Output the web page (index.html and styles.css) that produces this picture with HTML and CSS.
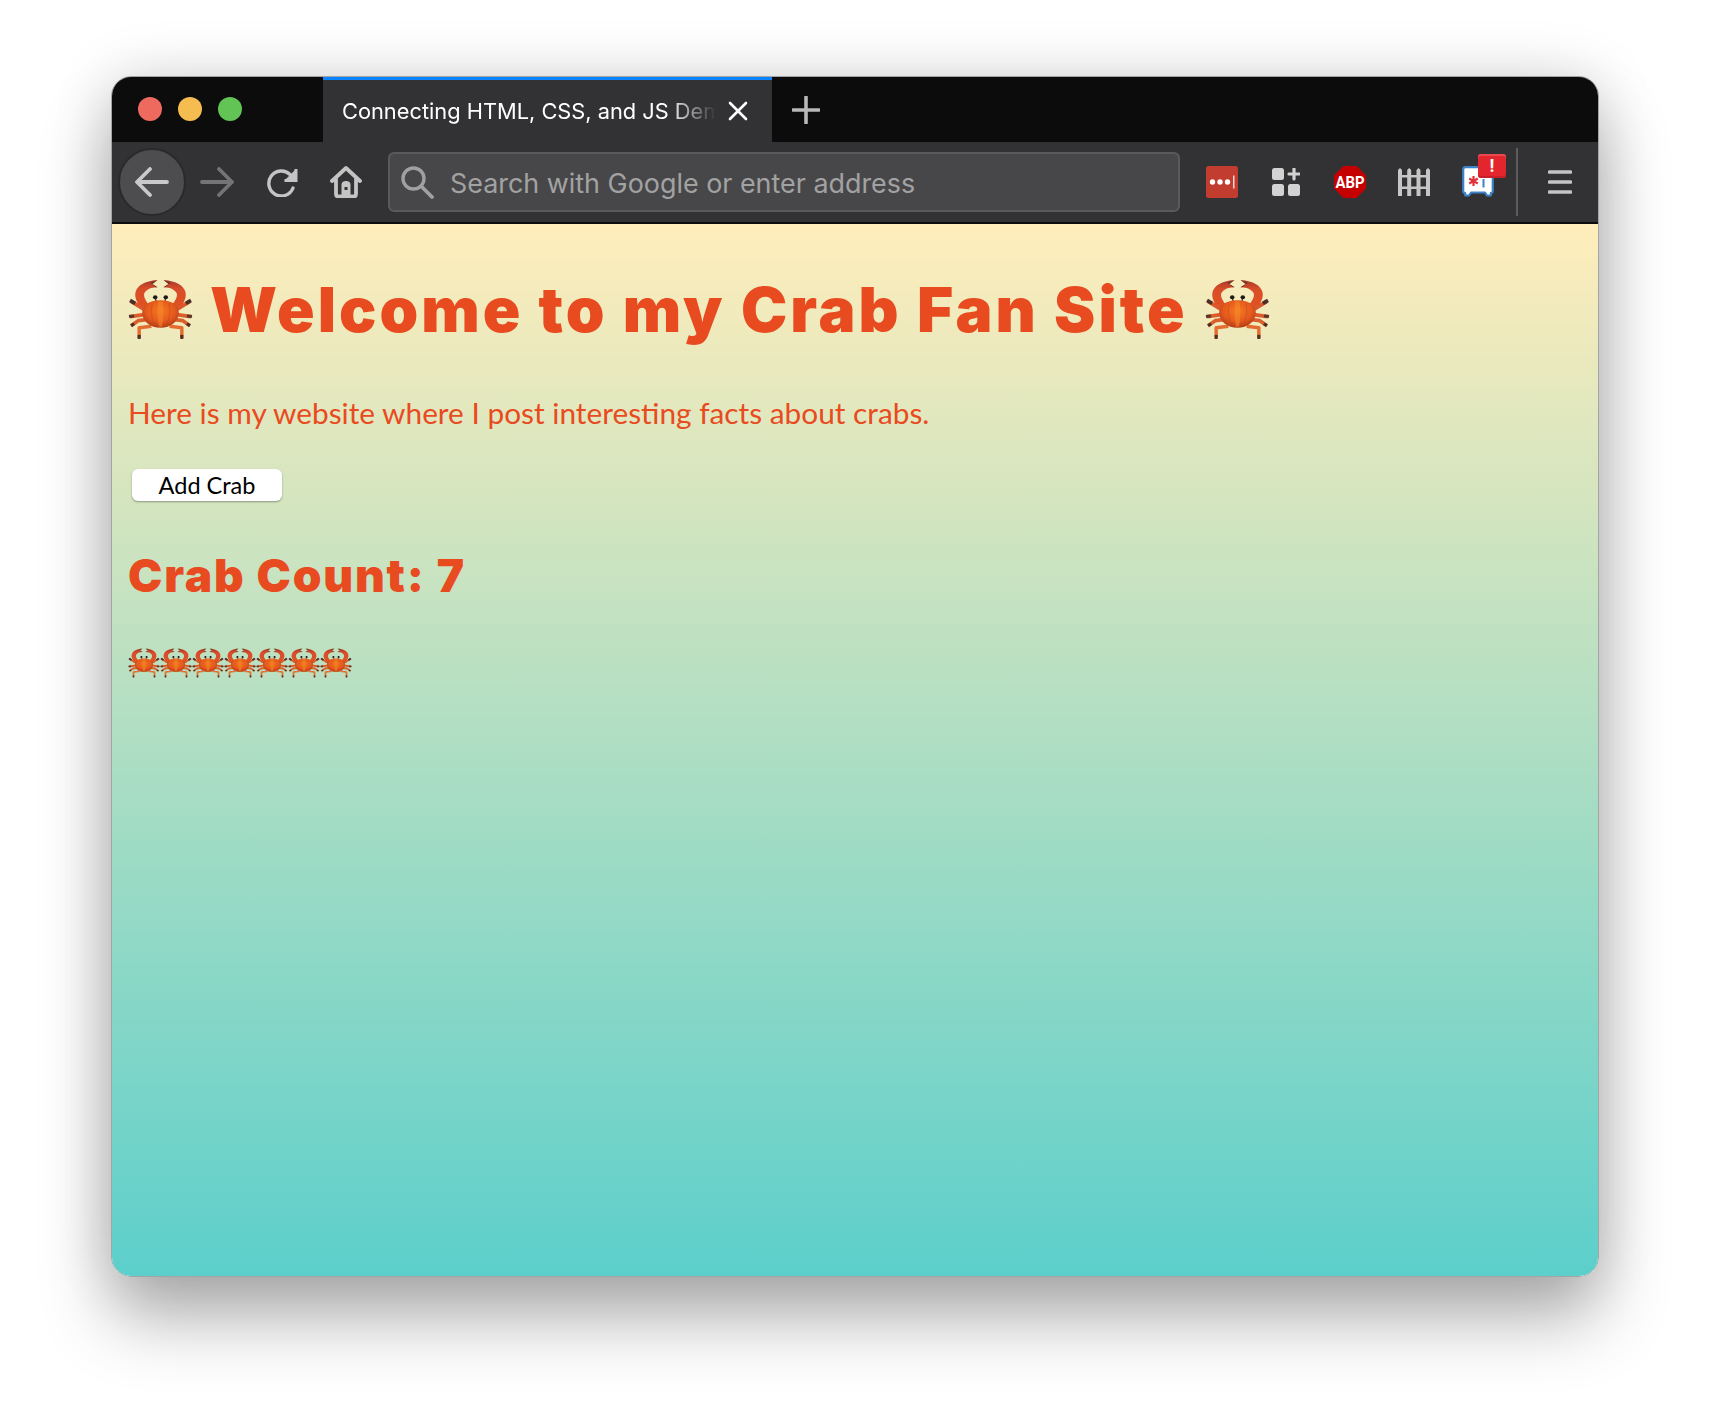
FILE: index.html
```html
<!DOCTYPE html>
<html lang="en">
<head>
<meta charset="utf-8">
<title>Crab Fan Site</title>
<link rel="stylesheet" href="styles.css">
</head>
<body>
<svg class="defs" width="0" height="0" aria-hidden="true">
  <defs>
    <radialGradient id="shell" cx="50%" cy="38%" r="62%">
      <stop offset="0" stop-color="#f4781f"/>
      <stop offset=".62" stop-color="#e65a1e"/>
      <stop offset="1" stop-color="#b23c16"/>
    </radialGradient>
    <linearGradient id="claw" x1="0" y1="0" x2="0" y2="1">
      <stop offset="0" stop-color="#a53a28"/>
      <stop offset=".3" stop-color="#d94c2a"/>
      <stop offset="1" stop-color="#e2531f"/>
    </linearGradient>
    <g id="crab-half">
      <path d="M15 30C9 25 6 18 7.500 12.500 9.500 6.500 16 2 29 1L24 5 29 8C23 8 18 10 16 14 15 18 18 22 21 26Z" fill="url(#claw)"/>
      <path d="M24 5 29 1 28 1.500 22 4ZM24 5 29 8 27 8Z" fill="#5a3328"/>
      <path d="M18 31 3 22" fill="none" stroke="#d9572a" stroke-width="3.800"/>
      <path d="M2 21 7 24" stroke="#4a2f28" stroke-width="3.600" fill="none"/>
      <path d="M16 35 2 37" fill="none" stroke="#dc5c2a" stroke-width="3.600"/>
      <path d="M1 37 6 36.300" stroke="#5a352a" stroke-width="3" fill="none"/>
      <path d="M18 40 10 41 3 46" fill="none" stroke="#d9602d" stroke-width="3.600" stroke-linejoin="round"/>
      <path d="M3 46 6 44" stroke="#4a2f28" stroke-width="3" fill="none"/>
      <path d="M23 46.500 11 48 11 58" fill="none" stroke="#e46c30" stroke-width="3.400" stroke-linejoin="round"/>
      <path d="M11 59 11 55" stroke="#4a2f28" stroke-width="3" fill="none"/>
      <path d="M27 19 28 24" stroke="#6a3a2a" stroke-width="1.400"/>
      <ellipse cx="26.800" cy="18" rx="2.200" ry="2" fill="#1f1917"/>
    </g>
    <g id="crab-art">
      <use href="#crab-half"/>
      <use href="#crab-half" transform="translate(64 0) scale(-1 1)"/>
      <path d="M14 33C14 25 22 21 32 21S50 25 50 33C50 42 42 48 32 48S14 42 14 33Z" fill="url(#shell)"/>
      <path d="M30 22C28.500 29 29 38 30.500 47H33.500C35 38 35.500 29 34 22Z" fill="#f68a2a" opacity=".55"/>
      <path d="M24 24C22 30 23 38 26 45M40 24C42 30 41 38 38 45" stroke="#c44a1a" stroke-width="1" fill="none" opacity=".5"/>
    </g>
  </defs>
</svg>

<div class="window">
  <header class="tabstrip">
    <div class="lights">
      <span class="light light-red"></span>
      <span class="light light-yellow"></span>
      <span class="light light-green"></span>
    </div>
    <div class="tab">
      <span class="tab-title">Connecting HTML, CSS, and JS Demo</span>
      <svg class="tab-close" width="20" height="20" viewBox="0 0 20 20"><path d="M2 2 18 18M18 2 2 18" stroke="#fff" stroke-width="2.600" stroke-linecap="round"/></svg>
    </div>
    <svg class="new-tab" width="28" height="28" viewBox="0 0 28 28"><path d="M14 1V27M1 14H27" stroke="#b8b8b8" stroke-width="3.600" stroke-linecap="round"/></svg>
  </header>

  <nav class="toolbar">
    <div class="tbtn tbtn-back">
      <svg width="34" height="30" viewBox="0 0 34 30"><path d="M32 15H3M15 2 2 15 15 28" fill="none" stroke="#c9c9c9" stroke-width="3.800" stroke-linecap="round" stroke-linejoin="round"/></svg>
    </div>
    <div class="tbtn">
      <svg width="34" height="30" viewBox="0 0 34 30"><path d="M2 15H31M19 2 32 15 19 28" fill="none" stroke="#747474" stroke-width="3.800" stroke-linecap="round" stroke-linejoin="round"/></svg>
    </div>
    <div class="tbtn">
      <svg class="icon-nudge" width="32" height="30" viewBox="0 0 32 30"><path d="M24 7.500A12.500 12.500 0 1 0 27 21" fill="none" stroke="#c4c4c4" stroke-width="3.400" stroke-linecap="round"/><path d="M30 2V13.500H18.500" fill="none" stroke="#c4c4c4" stroke-width="3"/><path d="M30 2V13.500H18.500Z" fill="#c4c4c4"/></svg>
    </div>
    <div class="tbtn">
      <svg class="icon-nudge" width="32" height="32" viewBox="0 0 32 32"><path d="M2 15 16 2 30 15M6 13V28C6 29.500 7 30.500 8.500 30.500H23.500C25 30.500 26 29.500 26 28V13" fill="none" stroke="#c4c4c4" stroke-width="3.800" stroke-linecap="round" stroke-linejoin="round"/><path d="M11.500 30V18.500C11.500 16 14 15 16 15S20.500 16 20.500 18.500V30Z" fill="#c4c4c4"/><rect x="14.500" y="21" width="3" height="3" fill="#323234"/></svg>
    </div>
    <div class="urlbar">
      <svg class="url-search" width="34" height="34" viewBox="0 0 34 34"><circle cx="13.500" cy="13.500" r="10.500" fill="none" stroke="#a0a0a0" stroke-width="3.400"/><path d="M21.500 21.500 32 32" stroke="#a0a0a0" stroke-width="3.800" stroke-linecap="round"/></svg>
      <span class="url-text">Search with Google or enter address</span>
    </div>
    <div class="tbtn tbtn-first">
      <svg width="32" height="32" viewBox="0 0 32 32"><rect width="32" height="32" rx="2.500" fill="#c23c30"/><circle cx="6.500" cy="16" r="2.700" fill="#fff"/><circle cx="14" cy="16" r="2.700" fill="#fff"/><circle cx="21.500" cy="16" r="2.700" fill="#fff"/><rect x="27" y="9.500" width="1.500" height="13" fill="#f3d5d0"/></svg>
    </div>
    <div class="tbtn">
      <svg width="28" height="28" viewBox="0 0 28 28"><rect width="12" height="12" rx="2.500" fill="#d2d2d2"/><rect y="16" width="12" height="12" rx="2.500" fill="#d2d2d2"/><rect x="16" y="16" width="12" height="12" rx="2.500" fill="#d2d2d2"/><path d="M22 1V11M17 6H27" stroke="#d2d2d2" stroke-width="3.200" stroke-linecap="round"/></svg>
    </div>
    <div class="tbtn">
      <svg width="32" height="32" viewBox="0 0 32 32"><path d="M9.400 0H22.600L32 9.400V22.600L22.600 32H9.400L0 22.600V9.400Z" fill="#c50000"/><text class="abp" x="16" y="22" text-anchor="middle" textLength="29" lengthAdjust="spacingAndGlyphs">ABP</text></svg>
    </div>
    <div class="tbtn">
      <svg width="32" height="28" viewBox="0 0 32 28"><path d="M0 2 2 0 4 2V28H0ZM9.200 2 11.200 0 13.200 2V28H9.200ZM18.500 2 20.500 0 22.500 2V28H18.500ZM28 2 30 0 32 2V28H28Z" fill="#c6c6c6"/><rect y="7" width="32" height="2.500" fill="#c6c6c6"/><rect y="18.500" width="32" height="2.500" fill="#c6c6c6"/></svg>
    </div>
    <div class="tbtn tbtn-ext">
      <svg width="32" height="32" viewBox="0 0 32 32"><path d="M3.500 1.200H28.500C30 1.200 30.800 2 30.800 3.500V25C30.800 26.300 30 27 28.800 27V29.500H25L23 26.500H9L7 29.500H3.200V27C2 27 1.200 26.300 1.200 25V3.500C1.200 2 2 1.200 3.500 1.200Z" fill="#fff" stroke="#3c82c8" stroke-width="2.200" stroke-linejoin="round"/><path d="M11.500 10V20M7.200 12.500 15.800 17.500M15.800 12.500 7.200 17.500" stroke="#e0323a" stroke-width="2.200"/><rect x="20.500" y="13" width="2" height="8.500" fill="#3c82c8"/></svg>
      <span class="badge">!</span>
    </div>
    <span class="separator"></span>
    <div class="tbtn tbtn-menu">
      <svg width="24" height="24" viewBox="0 0 24 24"><path d="M1.500 2H22.500M1.500 12H22.500M1.500 22H22.500" stroke="#c4c4c4" stroke-width="3.600" stroke-linecap="round"/></svg>
    </div>
  </nav>

  <main class="page">
    <h1 class="title"><svg class="crab crab-lg" viewBox="0 0 64 60"><use href="#crab-art"/></svg> <span class="title-text">Welcome to my Crab Fan Site</span> <svg class="crab crab-lg" viewBox="0 0 64 60"><use href="#crab-art"/></svg></h1>
    <p class="lead">Here is my website where I post interesting facts about crabs.</p>
    <button class="add" type="button">Add Crab</button>
    <h2 class="count">Crab Count: 7</h2>
    <div class="crabs">
      <svg class="crab crab-sm" viewBox="0 0 64 60"><use href="#crab-art"/></svg>
      <svg class="crab crab-sm" viewBox="0 0 64 60"><use href="#crab-art"/></svg>
      <svg class="crab crab-sm" viewBox="0 0 64 60"><use href="#crab-art"/></svg>
      <svg class="crab crab-sm" viewBox="0 0 64 60"><use href="#crab-art"/></svg>
      <svg class="crab crab-sm" viewBox="0 0 64 60"><use href="#crab-art"/></svg>
      <svg class="crab crab-sm" viewBox="0 0 64 60"><use href="#crab-art"/></svg>
      <svg class="crab crab-sm" viewBox="0 0 64 60"><use href="#crab-art"/></svg>
    </div>
  </main>
</div>
</body>
</html>
```

FILE: styles.css
```css
* { box-sizing: border-box; }
html, body { margin: 0; }
body {
  width: 1710px;
  height: 1424px;
  padding: 76px 111px 0;
  background: #fff;
  overflow: hidden;
  font-family: "Lato", sans-serif;
}
.defs { display: block; height: 0; }

.window {
  width: 1488px;
  height: 1201px;
  border-radius: 20px;
  overflow: hidden;
  display: flex;
  flex-direction: column;
  border: 1px solid #a4a4a4;
  box-shadow: 0 42px 70px rgba(0, 0, 0, .30), 0 0 60px rgba(0, 0, 0, .14);
}

.tabstrip {
  height: 65px;
  flex: none;
  display: flex;
  align-items: stretch;
  background: #0c0c0d;
}
.lights {
  width: 211px;
  display: flex;
  align-items: center;
  gap: 16px;
  padding: 0 0 2px 26px;
}
.light { width: 24px; height: 24px; border-radius: 50%; }
.light-red { background: #ee6a5f; }
.light-yellow { background: #f5bd4f; }
.light-green { background: #61c454; }

.tab {
  width: 449px;
  display: flex;
  align-items: center;
  background: #323234;
  border-top: 3px solid #0a84ff;
  padding: 0 24px 0 19px;
  color: #fff;
}
.tab-title {
  width: 375px;
  font: 400 21.800px/30px "Inter", "Liberation Sans", sans-serif;
  white-space: nowrap;
  overflow: hidden;
  -webkit-mask-image: linear-gradient(90deg, #000 87%, transparent 100%);
  mask-image: linear-gradient(90deg, #000 87%, transparent 100%);
}
.tab-close { margin-left: 12px; flex: none; }
.new-tab { align-self: center; margin: 0 0 0 20px; }

.toolbar {
  height: 82px;
  flex: none;
  display: flex;
  align-items: center;
  gap: 4px;
  padding: 0 0 0 7px;
  background: #323234;
  border-bottom: 2px solid #0c0c0d;
}
.tbtn {
  position: relative;
  width: 60px;
  height: 60px;
  flex: none;
  display: flex;
  align-items: center;
  justify-content: center;
}
.tbtn-back {
  width: 68px;
  height: 68px;
  border-radius: 50%;
  background: #4d4d4f;
  border: 2px solid #2a2a2c;
  margin: 0 -3px 0 -1px;
}
.icon-nudge { margin-left: 2px; }
.urlbar {
  width: 792px;
  height: 60px;
  margin-left: 9px;
  flex: none;
  display: flex;
  align-items: center;
  gap: 16px;
  padding-left: 10px;
  background: #474749;
  border: 2px solid #5a5a5c;
  border-radius: 6px;
}
.url-text {
  margin-top: 1px;
  font: 400 26.900px/34px "Inter", "Liberation Sans", sans-serif;
  color: #a2a2a2;
  white-space: nowrap;
}
.url-search { flex: none; }
.tbtn-first { margin-left: 8px; }
.abp {
  font: 700 16px "Roboto", "Liberation Sans", sans-serif;
  fill: #fff;
}
.badge {
  position: absolute;
  top: 2px;
  left: 30px;
  width: 28px;
  height: 24px;
  border-radius: 3px;
  background: #e3262e;
  box-shadow: inset 0 -2px 0 #c92028, inset 0 2px 0 #e94a50;
  color: #fff;
  font: 700 18px/24px "Roboto", "Liberation Sans", sans-serif;
  text-align: center;
}
.separator {
  width: 2px;
  height: 68px;
  margin-left: 4px;
  background: #5d5d5f;
  flex: none;
}
.tbtn-menu { margin-left: 8px; }

.page {
  flex: 1;
  padding: 0 16px;
  background: linear-gradient(180deg, #ffedbb 0%, #5ccfcb 100%);
  color: #e84b1f;
}
.crab { display: inline-block; vertical-align: middle; }
.crab-lg { width: 65px; height: 61px; flex: none; }
.crab-sm { width: 32px; height: 30px; flex: none; display: block; }

.title {
  display: flex;
  align-items: center;
  gap: 17px;
  margin: 0;
  padding-top: 52px;
  height: 118px;
  font-family: "Inter", "Lato", sans-serif;
  font-size: 62px;
  line-height: 61px;
  font-weight: 900;
  letter-spacing: 3px;
  white-space: nowrap;
}
.lead {
  margin: 51px 0 0;
  font-size: 29.800px;
  line-height: 40px;
  font-weight: 400;
}
.add {
  display: block;
  width: 150px;
  height: 32px;
  margin: 36px 0 0 4px;
  padding: 0;
  border: 0;
  border-radius: 6px;
  background: #fff;
  box-shadow: 0 1px 2px rgba(0, 0, 0, .35);
  color: #000;
  font: 400 23.500px/32px "Lato", sans-serif;
}
.count {
  margin: 47px 0 0;
  font-family: "Inter", "Lato", sans-serif;
  font-size: 46px;
  line-height: 54px;
  font-weight: 900;
  letter-spacing: 1.800px;
}
.crabs {
  display: flex;
  margin-top: 46px;
}
```
